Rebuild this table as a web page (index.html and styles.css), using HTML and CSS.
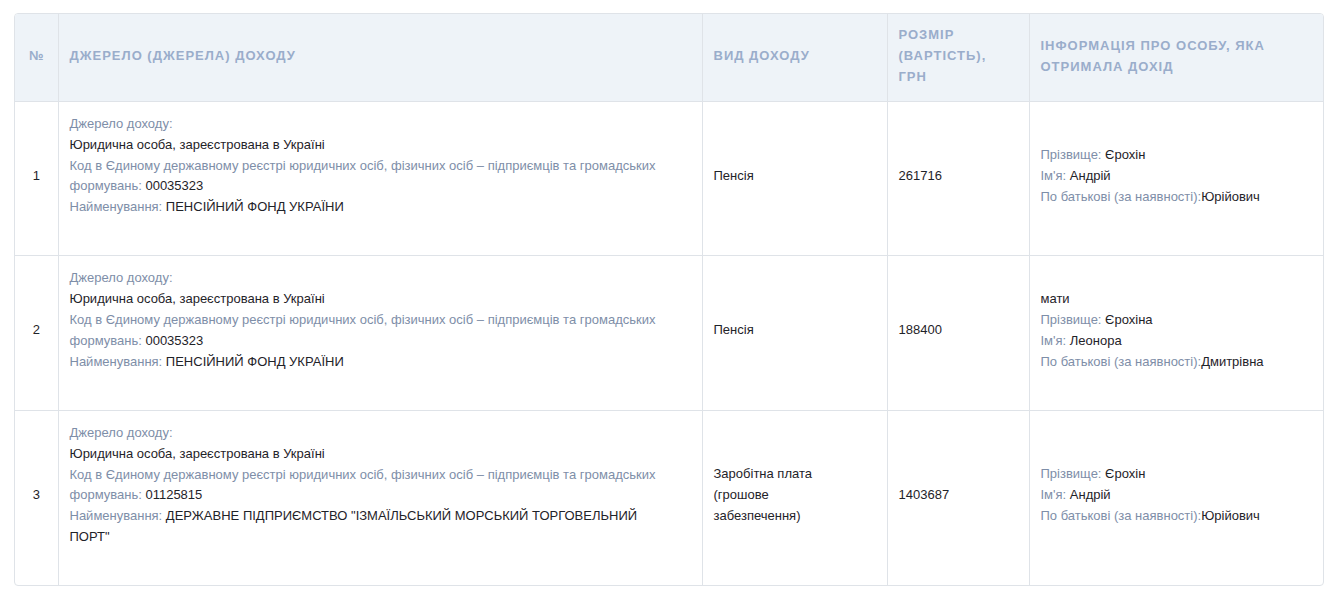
FILE: index.html
```html
<!DOCTYPE html>
<html lang="uk">
<head>
<meta charset="utf-8">
<title>Доходи</title>
<link rel="stylesheet" href="styles.css">
</head>
<body>
<div class="wrap">
<table class="tbl">
<colgroup>
<col class="c-num"><col class="c-src"><col class="c-type"><col class="c-size"><col class="c-info">
</colgroup>
<thead>
<tr>
<th class="num">№</th>
<th>Джерело (джерела) доходу</th>
<th>Вид доходу</th>
<th>Розмір (вартість), грн</th>
<th class="last">Інформація про особу, яка отримала дохід</th>
</tr>
</thead>
<tbody>
<tr>
<td class="num">1</td>
<td class="src">
<div class="lbl">Джерело доходу:</div>
<div class="val">Юридична особа, зареєстрована в Україні</div>
<div><span class="lbl">Код в Єдиному державному реєстрі юридичних осіб, фізичних осіб – підприємців та громадських формувань:</span> <span class="val">00035323</span></div>
<div><span class="lbl">Найменування:</span> <span class="val">ПЕНСІЙНИЙ ФОНД УКРАЇНИ</span></div>
</td>
<td class="val">Пенсія</td>
<td class="val">261716</td>
<td class="last">
<div><span class="lbl">Прізвище:</span> <span class="val">Єрохін</span></div>
<div><span class="lbl">Ім'я:</span> <span class="val">Андрій</span></div>
<div><span class="lbl">По батькові (за наявності):</span><span class="val">Юрійович</span></div>
</td>
</tr>
<tr>
<td class="num">2</td>
<td class="src">
<div class="lbl">Джерело доходу:</div>
<div class="val">Юридична особа, зареєстрована в Україні</div>
<div><span class="lbl">Код в Єдиному державному реєстрі юридичних осіб, фізичних осіб – підприємців та громадських формувань:</span> <span class="val">00035323</span></div>
<div><span class="lbl">Найменування:</span> <span class="val">ПЕНСІЙНИЙ ФОНД УКРАЇНИ</span></div>
</td>
<td class="val">Пенсія</td>
<td class="val">188400</td>
<td class="last">
<div class="val">мати</div>
<div><span class="lbl">Прізвище:</span> <span class="val">Єрохіна</span></div>
<div><span class="lbl">Ім'я:</span> <span class="val">Леонора</span></div>
<div><span class="lbl">По батькові (за наявності):</span><span class="val">Дмитрівна</span></div>
</td>
</tr>
<tr>
<td class="num">3</td>
<td class="src">
<div class="lbl">Джерело доходу:</div>
<div class="val">Юридична особа, зареєстрована в Україні</div>
<div><span class="lbl">Код в Єдиному державному реєстрі юридичних осіб, фізичних осіб – підприємців та громадських формувань:</span> <span class="val">01125815</span></div>
<div><span class="lbl">Найменування:</span> <span class="val">ДЕРЖАВНЕ ПІДПРИЄМСТВО "ІЗМАЇЛЬСЬКИЙ МОРСЬКИЙ ТОРГОВЕЛЬНИЙ ПОРТ"</span></div>
</td>
<td class="val">Заробітна плата (грошове забезпечення)</td>
<td class="val">1403687</td>
<td class="last">
<div><span class="lbl">Прізвище:</span> <span class="val">Єрохін</span></div>
<div><span class="lbl">Ім'я:</span> <span class="val">Андрій</span></div>
<div><span class="lbl">По батькові (за наявності):</span><span class="val">Юрійович</span></div>
</td>
</tr>
</tbody>
</table>
</div>
</body>
</html>
```
FILE: styles.css
```css
html, body {
  margin: 0;
  padding: 0;
  background: #ffffff;
}
body {
  padding: 13px 14px;
  font-family: "Liberation Sans", Arial, sans-serif;
  font-size: 13px;
  line-height: 20.8px;
  color: #1f2329;
}
.wrap {
  border: 1px solid #dfe3e8;
  border-radius: 4px;
  overflow: hidden;
}
.tbl {
  width: 100%;
  border-collapse: collapse;
  table-layout: fixed;
}
.c-num { width: 43px; }
.c-src { width: 644px; }
.c-type { width: 185px; }
.c-size { width: 142px; }
.c-info { width: auto; }
.tbl th {
  background: #eef3f8;
  color: #9aadcb;
  font-weight: bold;
  text-transform: uppercase;
  letter-spacing: 1px;
  text-align: left;
  vertical-align: middle;
  padding: 10px 30px 14px 11px;
  height: 63px;
  border-left: 1px solid #dfe3e8;
  border-bottom: 1px solid #dfe3e8;
  line-height: 21px;
}
.tbl td {
  vertical-align: middle;
  text-align: left;
  padding: 12.5px 30px 17.5px 11px;
  border-left: 1px solid #dfe3e8;
  border-top: 1px solid #dfe3e8;
}
.tbl tbody tr:first-child td { border-top: none; }
.tbl th:first-child, .tbl td:first-child { border-left: none; }
.tbl th.num, .tbl td.num {
  padding-left: 0;
  padding-right: 0;
  text-align: center;
  letter-spacing: 0;
}
.tbl td.src { padding-top: 12px; padding-bottom: 37.5px; }
.tbl th.last, .tbl td.last { padding-right: 12px; }
.lbl { color: #7e8ea8; }
.val { color: #1f2329; }
```
